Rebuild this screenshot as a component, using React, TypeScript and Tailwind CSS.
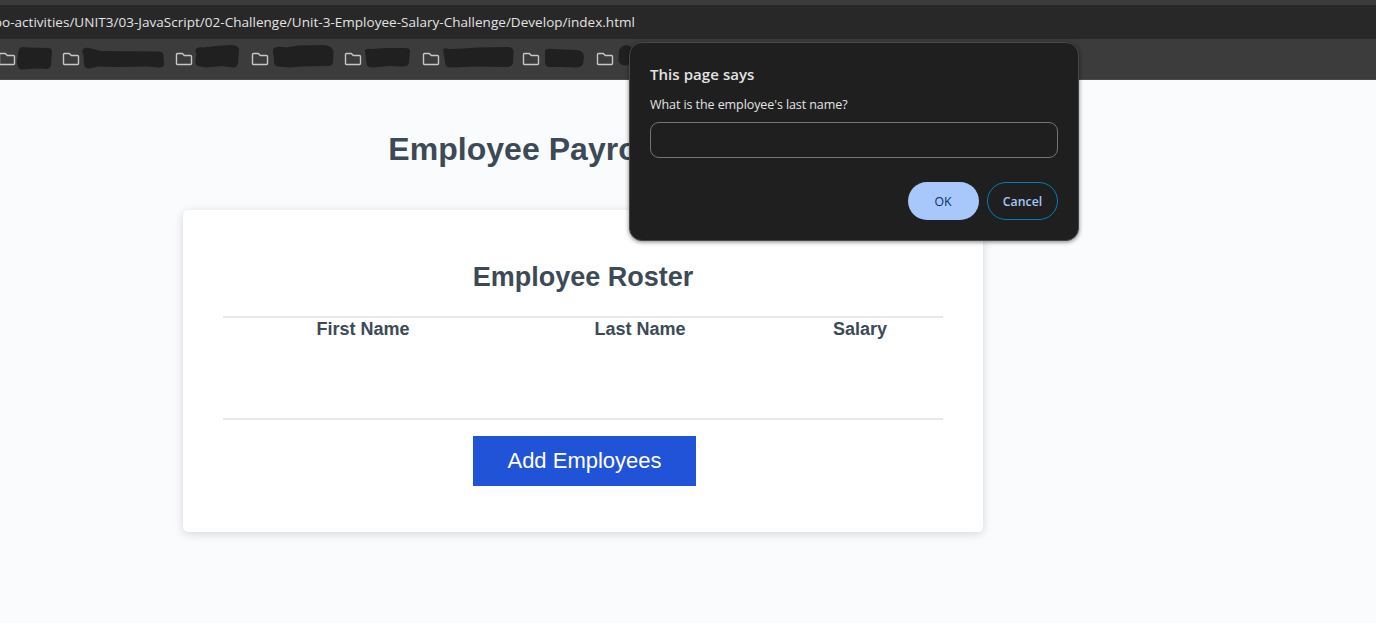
type Bookmark = { width: string; blob: string };

// Each path starts at the folder's left edge; y runs over the height of the bar.
const bookmarks: Bookmark[] = [
  {
    width: 'w-[64px]',
    blob: 'M21 9Q24 7.500 28 8.500L49 9Q53 9 53 13L52 26Q51 30.500 47 30L38 29.500L24 30.500Q20 31 19 28L18 24Q18 21 19 17Q19 11 21 9Z',
  },
  {
    width: 'w-[113px]',
    blob: 'M20 10Q22 8 26 9L38 12L94 12.500Q100 12 100.500 16L101 26Q100 29 95 28.500L84 27.500L52 28L36 27.500L26 29.500Q21 29 21 25L20.500 16Q18.500 12 20 10Z',
  },
  {
    width: 'w-[76px]',
    blob: 'M20 10Q22 7.500 27 8.500L40 7L54 6Q62 6 63 10L62 24Q61 29 57 28.500L46 27L30 28.500L22 27Q19 26 19.500 20L20.500 15Q18.500 12 20 10Z',
  },
  {
    width: 'w-[93px]',
    blob: 'M22 9Q26 7 34 8.500L46 6.500L72 6Q80 7 81.500 12L81 24Q79 28 73 27L50 27.500L38 28.500L25 27.500Q21 26 22 19Q20 11 22 9Z',
  },
  {
    width: 'w-[78px]',
    blob: 'M20 12Q20 9 26 10L42 9L60 9Q65 9 65 12L64 24Q63 28 57 27.500L44 27L28 28.500Q22 29 21.500 24Z',
  },
  {
    width: 'w-[100px]',
    blob: 'M20 11Q21 8 26 10L40 9.500L54 8.500L84 8Q90 8 90.500 12L90 24Q89 28 83 28L50 27.500L28 28.500Q22 29 22 23Z',
  },
  {
    width: 'w-[74px]',
    blob: 'M22 13Q22 9 29 10L42 10.500L54 11Q61 12 61 18L60 25Q58 29 51 28.500L40 28L27 28Q22 28 22 23Z',
  },
  {
    width: 'w-[80px]',
    blob: 'M22 11Q25 6 30 6Q36 7 36 16Q36 27 28 26.500Q22 26 21.500 21Z',
  },
];

function BookmarkItem({ width, blob }: Bookmark) {
  return (
    <svg className={`h-10 shrink-0 overflow-visible ${width}`} fill="none">
      <path
        d="M1.500 14.500H6.300L8.300 16.500H14.500Q15.500 16.500 15.500 17.500V24.500Q15.500 25.500 14.500 25.500H1.500Q0.500 25.500 0.500 24.500V15.500Q0.500 14.500 1.500 14.500Z"
        stroke="#c7c7c7"
        strokeWidth="1.4"
      />
      <path d={blob} fill="#202020" />
    </svg>
  );
}

function BrowserBar() {
  return (
    <header className="bg-[#3c3c3c] pt-[5px]">
      <div className="h-[34px] bg-[#282828]">
        <div className="flex h-full w-[635px] items-center justify-end overflow-hidden pt-px font-['Open_Sans',sans-serif] text-[13.5px] tracking-[0.03px] whitespace-nowrap text-[#e3e3e3]">
          <span>
            bo-activities/UNIT3/03-JavaScript/02-Challenge/Unit-3-Employee-Salary-Challenge/Develop/index.html
          </span>
        </div>
      </div>
      <div className="flex h-[41px] overflow-hidden border-b border-[#4a4a4a]">
        <div className="-ml-px flex">
          {bookmarks.map((b) => (
            <BookmarkItem key={b.blob} {...b} />
          ))}
        </div>
      </div>
    </header>
  );
}

function PromptDialog() {
  return (
    <div
      role="dialog"
      className="absolute top-[42px] left-[629px] h-[199px] w-[450px] rounded-[13px] border border-[#484848] bg-[#1f1f1f] px-5 font-['Open_Sans',sans-serif] text-[#e3e3e3] shadow-[0_1px_4px_rgba(0,0,0,0.5)]"
    >
      <h3 className="mt-[21px] h-5 text-[15px] leading-5 font-semibold tracking-[0.06px]">
        <span>This page says</span>
      </h3>
      <p className="mt-[11px] h-5 text-[12.5px] leading-5 tracking-[-0.08px]">
        <span>What is the employee's last name?</span>
      </p>
      <input className="mt-[7px] block h-9 w-full rounded-[9px] border border-[#757575] bg-transparent px-3 outline-none" />
      <div className="mt-6 flex justify-end gap-2 text-[12.3px] font-semibold">
        <button className="h-[38px] w-[71px] rounded-full bg-[#a8c7fa] pt-0.5 pr-px font-medium text-[#062e6f]">OK</button>
        <button className="h-[38px] w-[71px] rounded-full border border-[#047db7] pt-0.5 text-[#a8c7fa]">Cancel</button>
      </div>
    </div>
  );
}

export default function App() {
  return (
    <div className="relative h-[623px] w-[1376px] overflow-hidden bg-[#fafbfd] font-['Liberation_Sans',Arial,sans-serif] text-[#3c4a57]">
      <BrowserBar />
      <main className="ml-[183px] w-[800px]">
        <h1 className="pt-[49px] pl-px text-center text-[32px] leading-10 font-bold tracking-[0.03px]">
          Employee Payroll Tracker
        </h1>
        <section className="mt-[41px] h-[322px] rounded-[5px] bg-white px-10 pt-[49px] shadow-[0_2px_10px_rgba(0,0,0,0.15)]">
          <h2 className="text-center text-[27px] leading-9 font-bold">Employee Roster</h2>
          <div className="mt-[21px] h-[104px] border-y-2 border-[#e8e8e8] text-[18px] leading-[22px] font-bold">
            <div className="flex">
              <div className="w-[280px] text-center">First Name</div>
              <div className="w-[274px] text-center">Last Name</div>
              <div className="w-[166px] text-center">Salary</div>
            </div>
          </div>
          <button className="mt-4 ml-[250px] block h-[50px] w-[223px] bg-[#2053d7] pb-0.5 text-[22px] text-white">
            Add Employees
          </button>
        </section>
      </main>
      <PromptDialog />
    </div>
  );
}
